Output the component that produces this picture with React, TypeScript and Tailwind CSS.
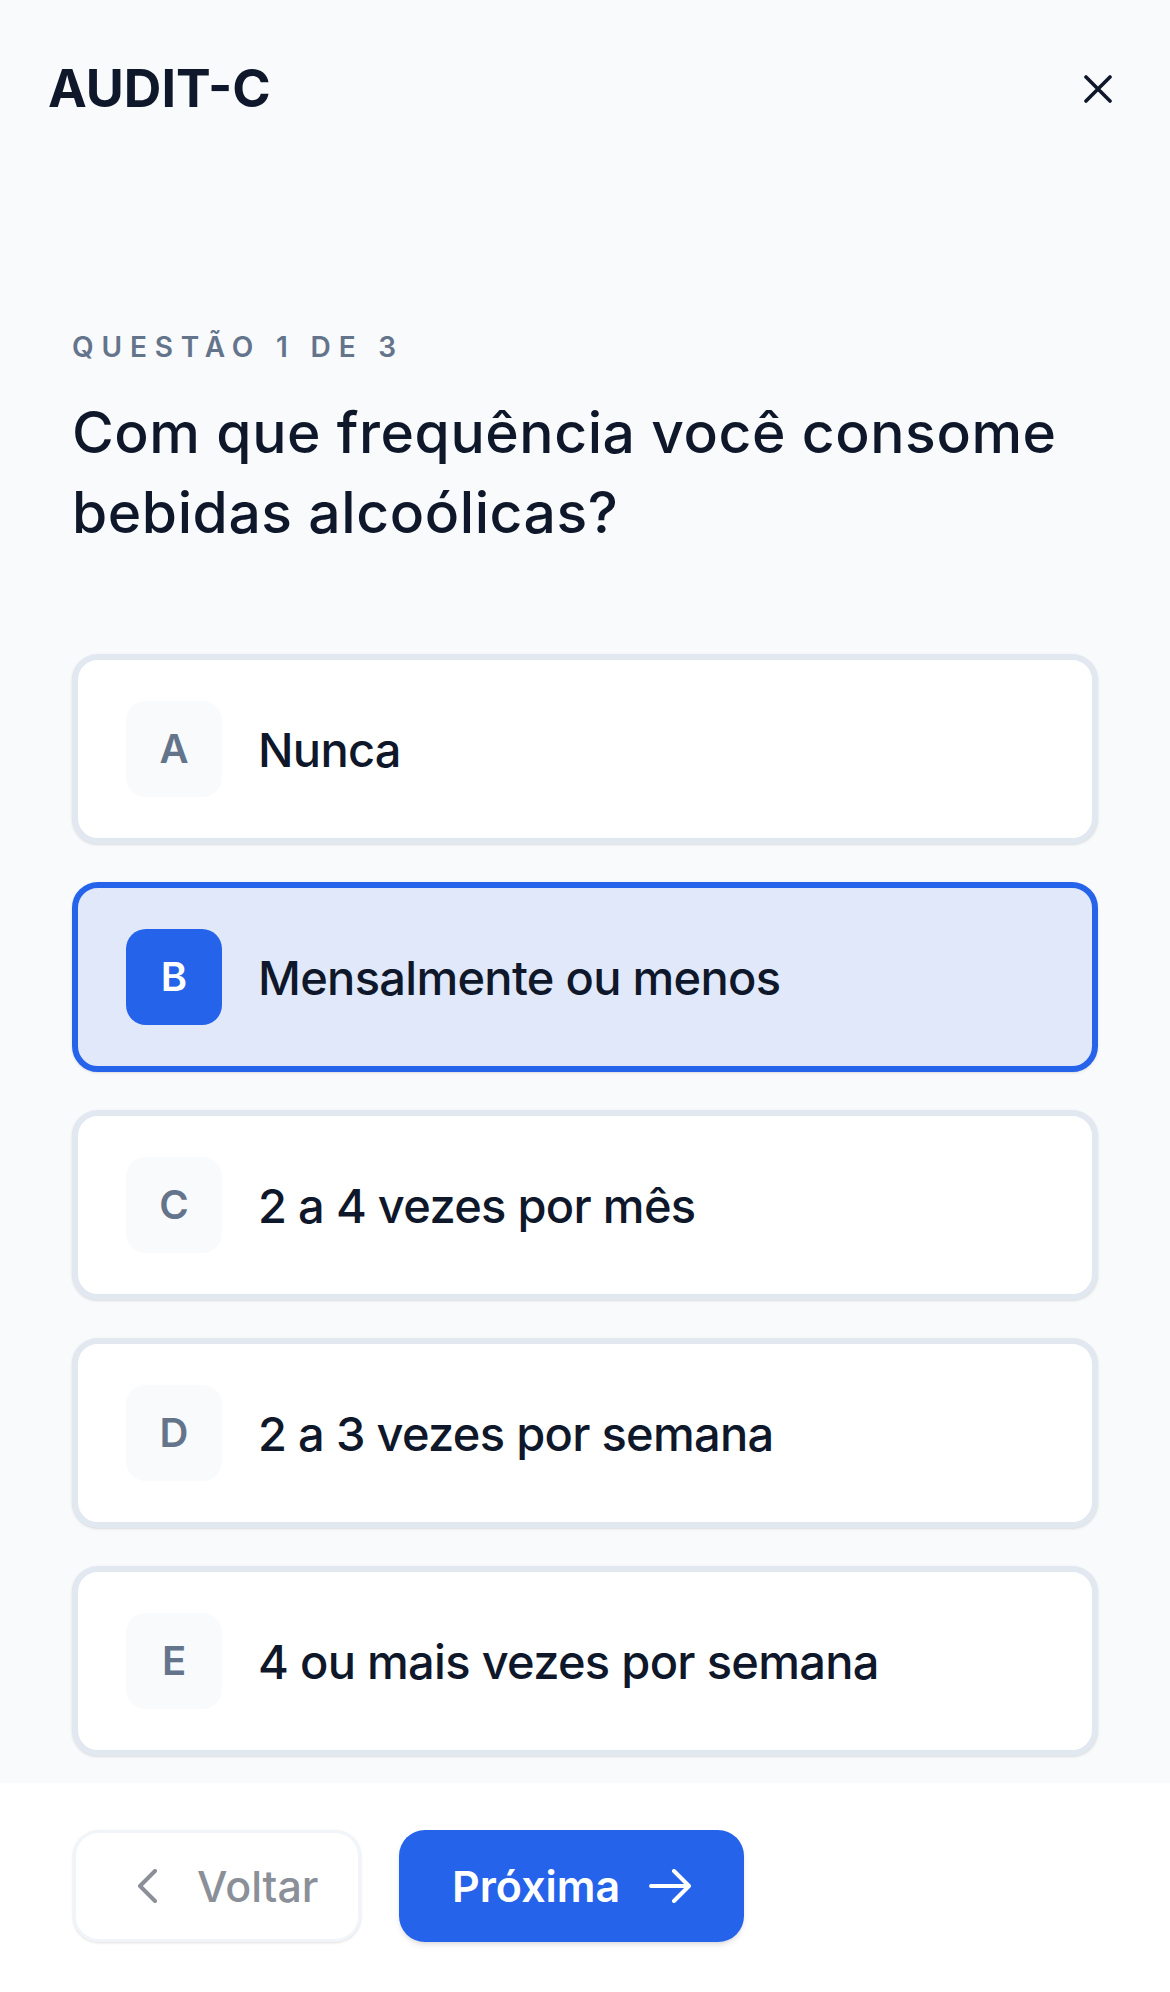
import { useState } from "react";

const options = [
  { key: "A", label: "Nunca" },
  { key: "B", label: "Mensalmente ou menos" },
  { key: "C", label: "2 a 4 vezes por mês" },
  { key: "D", label: "2 a 3 vezes por semana" },
  { key: "E", label: "4 ou mais vezes por semana" },
];

export default function App() {
  const [selected, setSelected] = useState("B");

  return (
    <div
      className="flex min-h-screen flex-col bg-[#f8fafc] text-[#0f172a]"
      style={{ fontFamily: "Inter, 'Noto Sans', sans-serif" }}
    >
      <header className="flex h-[178px] items-center justify-between pl-12 pr-[46px]">
        <h1 className="text-[52px] font-bold leading-none">AUDIT-C</h1>
        <button className="p-3 text-[#0f172a]" aria-label="Fechar">
          <svg width="28" height="28" viewBox="0 0 28 28" fill="none">
            <path d="M2 2L26 26M26 2L2 26" stroke="currentColor" strokeWidth="3.6" strokeLinecap="round" />
          </svg>
        </button>
      </header>

      <main className="flex-1 px-[72px] pt-[155px]">
        <p className="text-[28px] font-semibold uppercase leading-[28px] tracking-[0.28em] text-[#64748b]">
          Questão 1 de 3
        </p>
        <h2 className="mt-8 text-[57px] font-medium leading-[80px] tracking-[0.01em]">
          Com que frequência você consome bebidas alcoólicas?
        </h2>

        <div className="mt-[101px] flex flex-col gap-[38px]">
          {options.map((o) => {
            const active = o.key === selected;
            return (
              <button
                key={o.key}
                onClick={() => setSelected(o.key)}
                className={
                  "flex items-center gap-9 rounded-[26px] border-[6px] px-12 py-[41px] text-left shadow-sm " +
                  (active ? "border-[#2563eb] bg-[#e0e8f9]" : "border-[#e2e8f0] bg-white")
                }
              >
                <span
                  className={
                    "flex h-24 w-24 shrink-0 items-center justify-center rounded-[20px] text-[40px] font-semibold " +
                    (active ? "bg-[#2563eb] text-white" : "bg-[#f8fafc] text-[#64748b]")
                  }
                >
                  {o.key}
                </span>
                <span className="text-[47px] font-medium leading-none tracking-[-0.015em] text-[#0f172a]">
                  {o.label}
                </span>
              </button>
            );
          })}
        </div>
      </main>

      <footer className="mt-[27px] flex gap-[38px] bg-white px-[73px] pb-[50px] pt-[47px]">
        <button className="flex h-[112px] w-[288px] items-center gap-[40px] rounded-[26px] border-[3px] border-[#f1f5f9] bg-white pl-[61px] text-[43px] font-medium text-[#8a8f98] shadow-sm">
          <svg width="20" height="34" viewBox="0 0 20 34" fill="none">
            <path d="M18 2L3 17L18 32" stroke="currentColor" strokeWidth="4" strokeLinecap="round" strokeLinejoin="round" />
          </svg>
          Voltar
        </button>
        <button className="flex h-[112px] items-center gap-[29px] rounded-[26px] bg-[#2563eb] px-[53px] text-[43px] font-semibold text-white shadow-md">
          Próxima
          <svg width="42" height="34" viewBox="0 0 42 34" fill="none">
            <path d="M2 17H40M25 2L40 17L25 32" stroke="currentColor" strokeWidth="4" strokeLinecap="round" strokeLinejoin="round" />
          </svg>
        </button>
      </footer>
    </div>
  );
}
